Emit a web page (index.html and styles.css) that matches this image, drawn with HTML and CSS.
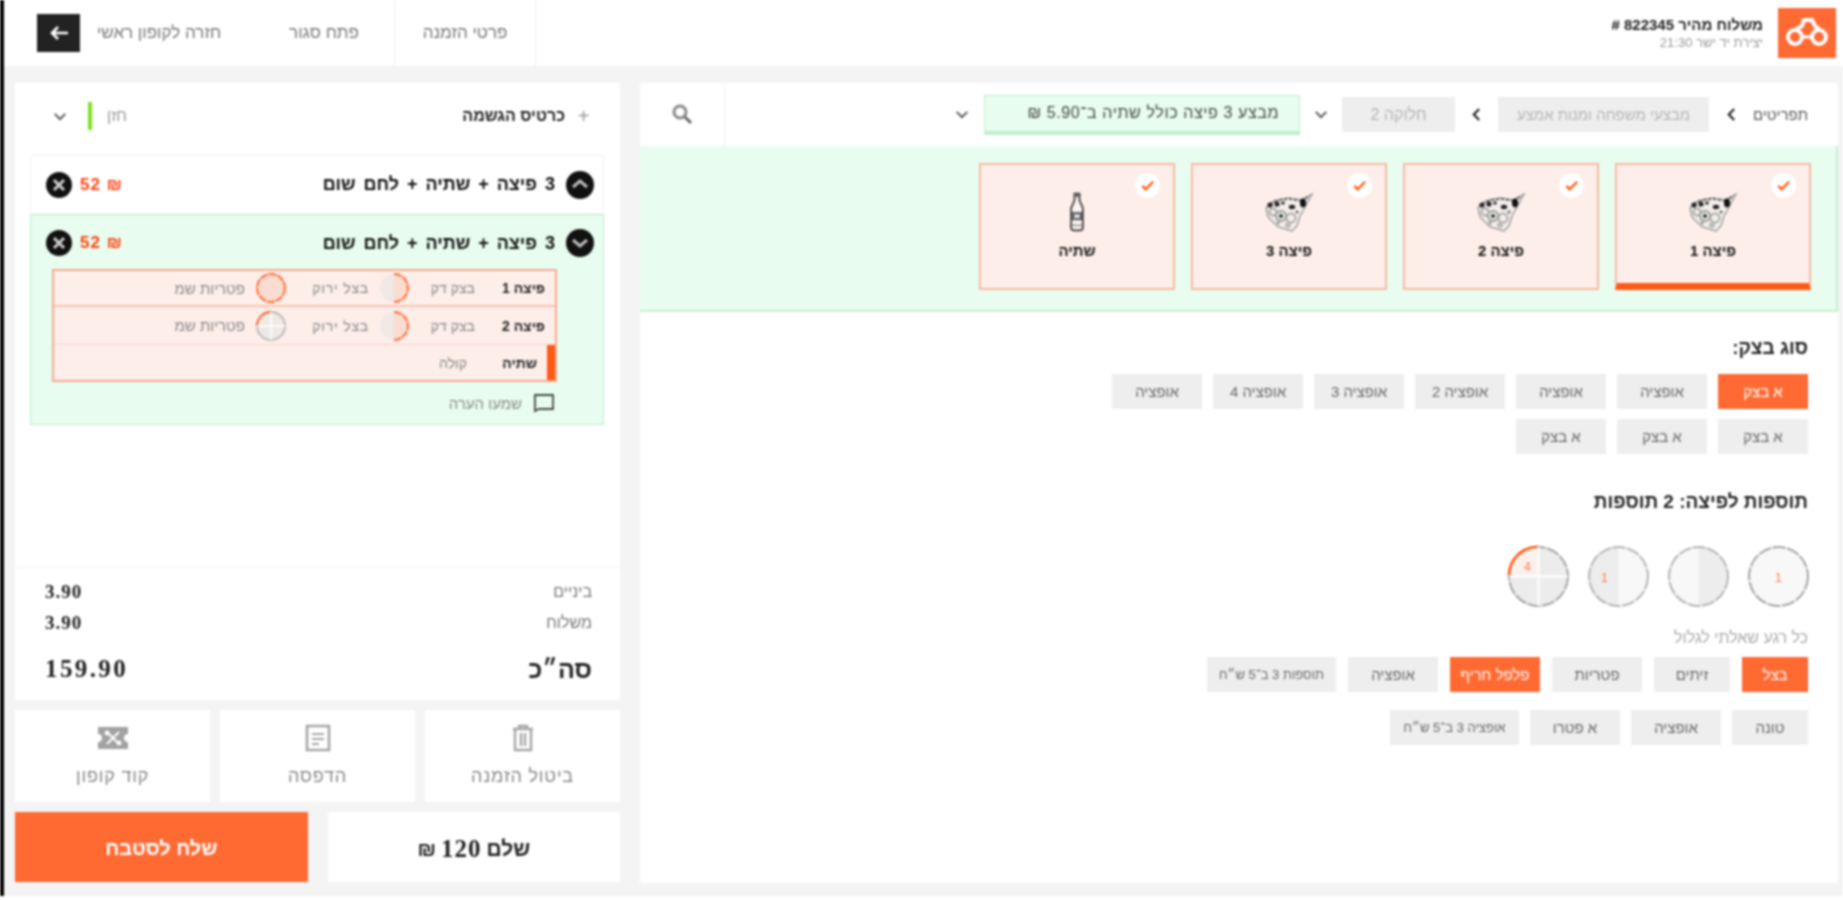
FILE: index.html
```html
<!DOCTYPE html>
<html lang="he" dir="rtl">
<head>
<meta charset="utf-8">
<title>הזמנה חדשה</title>
<link rel="stylesheet" href="styles.css">
</head>
<body>
<svg class="defs" aria-hidden="true">
  <symbol id="pizza" viewBox="0 0 50 40">
    <path d="M48 2 37 8 24 6 10 9 2 16 4 25 14 35 28 39 33 34 36 24 41 15Z" fill="#f4eeea" stroke="#9a9a9a" stroke-width="1.4"/>
    <path d="M6 12 14 8 26 7 38 9M44 5 36 10" fill="none" stroke="#555" stroke-width="1.6" stroke-dasharray="3 2"/>
    <circle cx="6" cy="13" r="2.6" fill="#222"/><circle cx="13" cy="12" r="2.6" fill="#222"/><circle cx="19" cy="11" r="1.8" fill="#333"/>
    <ellipse cx="28" cy="15" rx="3.2" ry="2.2" fill="#222"/><ellipse cx="39" cy="11" rx="3" ry="4.4" fill="#111"/>
    <circle cx="17" cy="24" r="2" fill="#1c3a2c"/><circle cx="17" cy="24" r="5" fill="none" stroke="#999" stroke-width="2"/>
    <circle cx="27" cy="26" r="4.5" fill="none" stroke="#aaa" stroke-width="2"/><circle cx="9" cy="20" r="3.5" fill="none" stroke="#aaa" stroke-width="2"/>
    <circle cx="33" cy="20" r="1.5" fill="#666"/><circle cx="24" cy="33" r="3" fill="#bbb"/><circle cx="14" cy="31" r="2" fill="#aaa"/>
  </symbol>
  <symbol id="bottle" viewBox="0 0 24 48">
    <path d="M9 2h6v8l4 9v24a3 3 0 0 1-3 3H8a3 3 0 0 1-3-3V19l4-9Z" fill="#fbf3ef" stroke="#333" stroke-width="2"/>
    <path d="M8 2h8v4H8ZM6 24h12v10H6Z" fill="#666"/><path d="M9 27h6v4H9Z" fill="#eee"/><path d="M6 40h12" stroke="#999" stroke-width="2"/>
  </symbol>
  <symbol id="check" viewBox="0 0 16 16"><path d="M2.5 8.5 6 12 14 4" fill="none" stroke="#ff5a14" stroke-width="2.6"/></symbol>
  <symbol id="chev-down" viewBox="0 0 16 10"><path d="M2 2 8 8 14 2" fill="none" stroke="#555" stroke-width="2.2"/></symbol>
  <symbol id="chev-left" viewBox="0 0 10 16"><path d="M8 2 2 8 8 14" fill="none" stroke="#222" stroke-width="2.4"/></symbol>
  <symbol id="trash" viewBox="0 0 24 28"><path d="M2 5h20M8 5V2h8v3M4 5v21h16V5M10 9v13M14 9v13" fill="none" stroke="#a6a6a6" stroke-width="2.4"/></symbol>
  <symbol id="receipt" viewBox="0 0 26 28"><path d="M2 2h22v24H2Z" fill="none" stroke="#a6a6a6" stroke-width="2.6"/><path d="M7 9h12v2H7Zm0 5h12v2H7Zm0 5h7v2H7Z" fill="#a6a6a6"/></symbol>
  <symbol id="coupon" viewBox="0 0 32 24"><path d="M1 1h30v7a4 4 0 0 0 0 8v7H1v-7a4 4 0 0 0 0-8Z" fill="#a2a2a2"/><path d="M10 6 22 18M22 6 10 18" stroke="#fff" stroke-width="2"/><circle cx="10" cy="7" r="2.4" fill="#fff"/><circle cx="22" cy="17" r="2.4" fill="#fff"/></symbol>
</svg>

<div class="app">
  <header class="topbar">
    <div class="brand">
      <div class="logo">
        <svg viewBox="0 0 58 50" width="58" height="50"><circle cx="17" cy="29" r="7" fill="none" stroke="#fff" stroke-width="4"/><circle cx="41" cy="29" r="7" fill="none" stroke="#fff" stroke-width="4"/><path d="M17 22 24 18 26 12H34L37 18 42 22" fill="none" stroke="#fff" stroke-width="4"/><path d="M24 29H34" stroke="#fff" stroke-width="3"/></svg>
      </div>
      <div class="brand-text">
        <div class="brand-title">משלוח מהיר 822345 #</div>
        <div class="brand-sub">יצירת יד ישר 21:30</div>
      </div>
    </div>
    <nav class="tabs">
      <div class="tab tab-details">פרטי הזמנה</div>
      <div class="tab tab-open">פתח סגור</div>
      <div class="tab tab-back">חזרה לקופון ראשי</div>
      <button class="back" type="button"><svg viewBox="0 0 20 16" width="20" height="16"><path d="M9 2 3 8 9 14M3 8H19" fill="none" stroke="#fff" stroke-width="2.6"/></svg></button>
    </nav>
  </header>

  <div class="workspace">
    <main class="main">
      <div class="crumbs">
        <span class="crumb-text">תפריטים</span>
        <span class="crumb-sep"><svg width="9" height="15"><use href="#chev-left"/></svg></span>
        <span class="chip chip-cat">מבצעי משפחה ומנות אמצע</span>
        <span class="crumb-sep crumb-sep-b"><svg width="9" height="15"><use href="#chev-left"/></svg></span>
        <span class="chip chip-step">חלוקה 2</span>
        <span class="crumb-sep crumb-sep-c"><svg width="14" height="9"><use href="#chev-down"/></svg></span>
        <span class="chip-green">מבצע 3 פיצה כולל שתיה ב־5.90 ₪</span>
        <span class="crumb-sep"><svg width="14" height="9"><use href="#chev-down"/></svg></span>
        <span class="crumb-fill"></span>
        <span class="search"><svg viewBox="0 0 24 24" width="24" height="24"><circle cx="10" cy="9" r="6" fill="none" stroke="#8a8a8a" stroke-width="3"/><path d="M15 14 21 20" stroke="#666" stroke-width="3"/></svg></span>
      </div>

      <div class="band">
        <div class="card card-active">
          <span class="tick"><svg width="15" height="15"><use href="#check"/></svg></span>
          <svg class="card-icon" width="50" height="40"><use href="#pizza"/></svg>
          <div class="card-label">פיצה 1</div>
        </div>
        <div class="card">
          <span class="tick"><svg width="15" height="15"><use href="#check"/></svg></span>
          <svg class="card-icon" width="50" height="40"><use href="#pizza"/></svg>
          <div class="card-label">פיצה 2</div>
        </div>
        <div class="card">
          <span class="tick"><svg width="15" height="15"><use href="#check"/></svg></span>
          <svg class="card-icon" width="50" height="40"><use href="#pizza"/></svg>
          <div class="card-label">פיצה 3</div>
        </div>
        <div class="card">
          <span class="tick"><svg width="15" height="15"><use href="#check"/></svg></span>
          <svg class="card-icon" width="22" height="40"><use href="#bottle"/></svg>
          <div class="card-label">שתיה</div>
        </div>
      </div>

      <section class="config">
        <h2 class="sec-title">סוג בצק:</h2>
        <div class="options options-dough">
          <button class="opt opt-on" type="button">א בצק</button>
          <button class="opt" type="button">אופציה</button>
          <button class="opt" type="button">אופציה</button>
          <button class="opt" type="button">אופציה 2</button>
          <button class="opt" type="button">אופציה 3</button>
          <button class="opt" type="button">אופציה 4</button>
          <button class="opt" type="button">אופציה</button>
          <button class="opt" type="button">א בצק</button>
          <button class="opt" type="button">א בצק</button>
          <button class="opt" type="button">א בצק</button>
        </div>

        <h2 class="sec-title sec-title-b">תוספות לפיצה: 2 תוספות</h2>
        <div class="sides">
          <svg class="side" viewBox="0 0 62 62" width="63" height="63"><circle cx="31" cy="31" r="29" fill="#f8f8f8" stroke="#a4a4a4" stroke-width="2" stroke-dasharray="13 1.5"/><text x="31" y="36" class="side-num">1</text></svg>
          <svg class="side" viewBox="0 0 62 62" width="63" height="63"><circle cx="31" cy="31" r="29" fill="#f8f8f8"/><path d="M31 2A29 29 0 0 1 31 60Z" fill="#ededed"/><circle cx="31" cy="31" r="29" fill="none" stroke="#b4b4b4" stroke-width="2" stroke-dasharray="13 1.5"/></svg>
          <svg class="side" viewBox="0 0 62 62" width="63" height="63"><circle cx="31" cy="31" r="29" fill="#f8f8f8"/><path d="M31 2A29 29 0 0 0 31 60Z" fill="#ededed"/><circle cx="31" cy="31" r="29" fill="none" stroke="#b4b4b4" stroke-width="2" stroke-dasharray="13 1.5"/><text x="17" y="36" class="side-num">1</text></svg>
          <svg class="side" viewBox="0 0 62 62" width="63" height="63"><circle cx="31" cy="31" r="29" fill="#ececec" stroke="#a4a4a4" stroke-width="2" stroke-dasharray="13 1.5"/><path d="M30 30V2A28 28 0 0 0 2 30Z" fill="#fbf1ec"/><path d="M31 2V60M2 31H60" stroke="#fff" stroke-width="2"/><path d="M30 2A28 28 0 0 0 2 30" fill="none" stroke="#ff5a14" stroke-width="2.6"/><text x="20" y="26" class="side-num">4</text></svg>
        </div>
        <div class="sides-label">כל רגע שאלתי לגלול</div>
        <div class="options options-top">
          <button class="opt opt-on opt-66" type="button">בצל</button>
          <button class="opt opt-76" type="button">זיתים</button>
          <button class="opt" type="button">פטריות</button>
          <button class="opt opt-on" type="button">פלפל חריף</button>
          <button class="opt" type="button">אופציה</button>
          <button class="opt opt-wide" type="button">תוספות 3 ב־5 ש״ח</button>
        </div>
        <div class="options options-top options-last">
          <button class="opt opt-76" type="button">טונה</button>
          <button class="opt" type="button">אופציה</button>
          <button class="opt" type="button">א פטרו</button>
          <button class="opt opt-wide" type="button">אופציה 3 ב־5 ש״ח</button>
        </div>
      </section>
    </main>

    <aside class="side-col">
      <div class="cart">
        <div class="cart-head">
          <div class="cart-head-title"><span class="plus">+</span>כרטיס הגשמה</div>
          <div class="cart-select">
            <span class="cart-select-text">חזן</span>
            <span class="cart-select-bar"></span>
            <svg width="14" height="9"><use href="#chev-down"/></svg>
          </div>
        </div>

        <div class="items">
          <div class="item">
            <div class="item-head">
              <svg class="round" viewBox="0 0 28 28" width="28" height="28"><circle cx="14" cy="14" r="14" fill="#111"/><path d="M7 16 14 10 21 16" fill="none" stroke="#bbb" stroke-width="3"/></svg>
              <span class="item-title">3 פיצה + שתיה + לחם שום</span>
              <span class="item-price">₪ 52</span>
              <svg class="round-x" viewBox="0 0 26 26" width="26" height="26"><circle cx="13" cy="13" r="13" fill="#111"/><path d="M8 8 18 18M18 8 8 18" stroke="#ccc" stroke-width="3"/></svg>
            </div>
          </div>
          <div class="item item-open">
            <div class="item-head">
              <svg class="round" viewBox="0 0 28 28" width="28" height="28"><circle cx="14" cy="14" r="14" fill="#111"/><path d="M7 11 14 17 21 11" fill="none" stroke="#bbb" stroke-width="3"/></svg>
              <span class="item-title">3 פיצה + שתיה + לחם שום</span>
              <span class="item-price">₪ 52</span>
              <svg class="round-x" viewBox="0 0 26 26" width="26" height="26"><circle cx="13" cy="13" r="13" fill="#111"/><path d="M8 8 18 18M18 8 8 18" stroke="#ccc" stroke-width="3"/></svg>
            </div>
            <div class="sub">
              <div class="sub-row">
                <span class="sub-name">פיצה 1</span>
                <span class="sub-dough">בצק דק</span>
                <svg class="mini" viewBox="0 0 30 30" width="30" height="30"><circle cx="15" cy="15" r="14" fill="#f0e9e6"/><path d="M15 1A14 14 0 0 1 15 29Z" fill="#fbdcd0"/><path d="M15 1A14 14 0 0 1 15 29" fill="none" stroke="#ff6a33" stroke-width="2" stroke-dasharray="8 1"/></svg>
                <span class="sub-top">בצל ירוק</span>
                <svg class="mini mini-b" viewBox="0 0 30 30" width="30" height="30"><circle cx="15" cy="15" r="14" fill="#fbdcd0" stroke="#ff6a33" stroke-width="2" stroke-dasharray="8 1"/></svg>
                <span class="sub-top-b">פטריות שמ</span>
              </div>
              <div class="sub-row sub-row-tall">
                <span class="sub-name">פיצה 2</span>
                <span class="sub-dough">בצק דק</span>
                <svg class="mini" viewBox="0 0 30 30" width="30" height="30"><circle cx="15" cy="15" r="14" fill="#f0e9e6"/><path d="M15 1A14 14 0 0 1 15 29Z" fill="#fbdcd0"/><path d="M15 1A14 14 0 0 1 15 29" fill="none" stroke="#ff6a33" stroke-width="2" stroke-dasharray="8 1"/></svg>
                <span class="sub-top">בצל ירוק</span>
                <svg class="mini mini-b" viewBox="0 0 30 30" width="30" height="30"><circle cx="15" cy="15" r="14" fill="#efe9e6" stroke="#bbb" stroke-width="2"/><path d="M15 1A14 14 0 0 0 1 15" fill="none" stroke="#ff6a33" stroke-width="2"/><path d="M15 1V29M1 15H29" stroke="#fff" stroke-width="1.5"/></svg>
                <span class="sub-top-b">פטריות שמ</span>
              </div>
              <div class="sub-row sub-row-last">
                <span class="sub-name">שתיה</span>
                <span class="sub-dough">קולה</span>
              </div>
            </div>
            <div class="note">
              <svg viewBox="0 0 22 20" width="22" height="20"><path d="M2 2H20V16H6L2 18Z" fill="none" stroke="#444" stroke-width="1.8"/></svg>
              <span>שמעו הערה</span>
            </div>
          </div>
        </div>

        <div class="totals">
          <div class="tot-row"><span>ביניים</span><b class="tot-num">3.90</b></div>
          <div class="tot-row"><span>משלוח</span><b class="tot-num">3.90</b></div>
          <div class="tot-row tot-grand"><span>סה״כ</span><b class="tot-num">159.90</b></div>
        </div>
      </div>

      <div class="actions">
        <button class="action" type="button"><svg width="24" height="28"><use href="#trash"/></svg><span>ביטול הזמנה</span></button>
        <button class="action" type="button"><svg width="26" height="28"><use href="#receipt"/></svg><span>הדפסה</span></button>
        <button class="action" type="button"><svg width="32" height="24"><use href="#coupon"/></svg><span>קוד קופון</span></button>
      </div>

      <div class="pay">
        <button class="pay-btn pay-total" type="button">שלם <b>120</b>₪</button>
        <button class="pay-btn pay-send" type="button">שלח לסטבח</button>
      </div>
    </aside>
  </div>
</div>
</body>
</html>
```

FILE: styles.css
```css
* { box-sizing: border-box; }
html, body { margin: 0; height: 100%; }
body {
  background: #fff;
  font-family: "Liberation Sans", "DejaVu Sans", sans-serif;
  color: #222;
  overflow: hidden;
}
button { font: inherit; border: 0; padding: 0; color: inherit; }
.defs { display: none; }

.app {
  height: 896px;
  border-left: 4px solid #000;
  background: #f4f4f4;
  display: flex;
  flex-direction: column;
  filter: blur(1px);
}

/* top bar */
.topbar {
  height: 66px;
  background: #fff;
  display: flex;
  justify-content: space-between;
  align-items: stretch;
  padding: 0 7px 0 33px;
  flex: none;
}
.brand { display: flex; gap: 15px; align-items: flex-start; padding-top: 8px; }
.logo { width: 58px; height: 50px; background: #ff6a33; }
.logo svg { display: block; }
.brand-text { padding-top: 8px; }
.brand-title { font-size: 15px; font-weight: 700; line-height: 18px; white-space: nowrap; }
.brand-sub { font-size: 13px; color: #999; line-height: 16px; margin-top: 1px; }
.tabs { display: flex; align-items: stretch; }
.tab { display: flex; align-items: center; justify-content: center; font-size: 17px; color: #777; white-space: nowrap; }
.tab-details { width: 142px; border-left: 1px solid #eee; border-right: 1px solid #eee; }
.tab-open { width: 140px; }
.tab-back { width: 174px; padding: 0 34px 0 18px; }
.back {
  width: 43px; height: 38px; align-self: flex-start; margin-top: 14px;
  background: #222; display: flex; align-items: center; justify-content: center;
}

/* workspace */
.workspace {
  flex: 1;
  min-height: 0;
  display: flex;
  gap: 20px;
  padding: 17px 5px 13px 11px;
}
.main {
  width: 1198px;
  background: #fff;
  display: flex;
  flex-direction: column;
}
.crumbs {
  height: 63px;
  flex: none;
  display: flex;
  align-items: center;
  padding-right: 30px;
  font-size: 15px;
  color: #555;
}
.crumb-text { width: 55px; white-space: nowrap; }
.crumb-sep { width: 44px; display: flex; justify-content: center; }
.crumb-sep-b { width: 43px; }
.crumb-sep-c { width: 42px; }
.chip {
  height: 35px; background: #eee; color: #b4b4b4;
  display: flex; align-items: center; justify-content: center; font-size: 15px; white-space: nowrap;
}
.chip-cat { width: 211px; }
.chip-step { width: 113px; font-size: 16px; }
.chip-green {
  width: 316px; height: 40px; background: #e8fdef;
  border: 1px solid #bfeecd; border-bottom-width: 4px;
  display: flex; align-items: center; padding: 0 20px;
  font-size: 16px; letter-spacing: 0.6px; color: #444; white-space: nowrap;
}
.crumb-fill { flex: 1; height: 100%; }
.search {
  width: 85px; height: 100%;
  border-right: 1px solid #f2f2f2;
  display: flex; align-items: center; justify-content: center;
}

.band {
  height: 166px;
  flex: none;
  background: #e8fdef;
  border-bottom: 2px solid #c6efd3;
  border-right: 2px solid #c6efd3;
  padding: 17px 25px 0 0;
  display: flex;
  gap: 16px;
}
.card {
  position: relative;
  width: 196px;
  height: 127px;
  background: #fdeeea;
  border: 2px solid #f7b9a3;
  display: flex;
  flex-direction: column;
  align-items: center;
  padding-top: 27px;
}
.card-active { border-bottom: 7px solid #ff5a14; }
.card-icon { display: block; }
.card-label { font-size: 15px; font-weight: 700; color: #111; margin-top: 9px; line-height: 20px; }
.tick {
  position: absolute; top: 8px; right: 13px;
  width: 25px; height: 25px; border-radius: 50%; background: #fff;
  display: flex; align-items: center; justify-content: center;
}

.config { padding: 26px 30px 0 0; flex: 1; }
.sec-title { margin: 0; font-size: 19px; font-weight: 700; line-height: 20px; color: #222; }
.sec-title-b { margin-top: 38px; }
.options { display: flex; flex-wrap: wrap; gap: 10px 11px; }
.options-dough { width: 700px; margin-top: 16px; }
.opt {
  width: 90px; height: 35px; background: #eee; color: #666;
  font-size: 15px; display: flex; align-items: center; justify-content: center;
  white-space: nowrap;
}
.opt-on { background: #ff6a33; color: #fff; }
.opt-66 { width: 66px; }
.opt-76 { width: 76px; }
.opt-wide { width: 129px; font-size: 13px; }
.sides { display: flex; gap: 17px; margin: 33px -2px 0 0; }
.side { display: block; }
.side-num { font: 12px "Liberation Sans", sans-serif; fill: #ff7a4a; text-anchor: middle; }
.sides-label { font-size: 16px; color: #aaa; line-height: 16px; margin-top: 22px; }
.options-top { margin-top: 11px; gap: 12px; }
.options-last { margin-top: 18px; gap: 11px; }

/* side column */
.side-col { width: 605px; display: flex; flex-direction: column; gap: 10px; }
.cart { height: 617px; background: #fff; display: flex; flex-direction: column; }
.cart-head {
  height: 72px; flex: none;
  display: flex; justify-content: space-between; align-items: center;
  padding: 0 26px 6px 25px;
}
.cart-head-title { font-size: 16px; font-weight: 700; color: #222; display: flex; align-items: center; gap: 8px; }
.plus { font-weight: 400; font-size: 20px; color: #999; width: 21px; text-align: center; line-height: 20px; }
.cart-select { display: flex; align-items: center; font-size: 16px; color: #999; height: 30px; }
.cart-select-text { margin-left: 15px; }
.cart-select-bar { width: 4px; height: 28px; background: #7be31e; margin-left: 21px; }
.cart-select svg { margin-left: 13px; }

.items { padding: 0 16px 0 15px; }
.item { border: 1px solid #f4f4f4; }
.item-head {
  height: 57px; display: flex; align-items: center;
  padding: 0 9px 0 15px;
}
.round { flex: none; }
.item-title { font-size: 18px; font-weight: 700; color: #111; margin-right: 11px; word-spacing: 3px; white-space: nowrap; }
.item-price { margin-right: auto; font-size: 17px; font-weight: 700; color: #ff3d0a; margin-left: 8px; letter-spacing: 1px; white-space: nowrap; }
.round-x { flex: none; }
.item-open { background: #e8fdef; border-color: #bdeccb; height: 211px; }
.item-open .item-head { height: 54px; padding-top: 2px; }
.sub {
  margin: 0 46px 0 21px;
  background: #fdeeea;
  border: 2px solid #f7a98e;
}
.sub-row {
  height: 36px; display: flex; align-items: center;
  padding-right: 10px; font-size: 14px; color: #888;
  border-bottom: 2px solid #f9c3b0;
}
.sub-row-tall { height: 38px; border-bottom: 1px solid #fad3c5; }
.sub-row-last { height: 35px; border: 0; border-right: 8px solid #ff5a14; padding-right: 10px; }
.sub-name { width: 48px; font-weight: 700; color: #222; margin-left: 22px; white-space: nowrap; }
.sub-dough { width: 46px; margin-left: 20px; white-space: nowrap; }
.mini { flex: none; margin-left: 10px; }
.mini-b { margin-left: 11px; }
.sub-top { width: 66px; margin-left: 17px; white-space: nowrap; letter-spacing: 0.8px; }
.sub-top-b { white-space: nowrap; font-size: 15px; }
.note {
  display: flex; align-items: center; gap: 11px;
  padding: 11px 48px 0 0; font-size: 15px; color: #888;
}

.totals {
  margin-top: auto;
  height: 133px;
  flex: none;
  border-top: 1px solid #f2f2f2;
  padding: 14px 28px 0 30px;
  display: flex;
  flex-direction: column;
  gap: 11px;
}
.tot-row { display: flex; justify-content: space-between; align-items: center; height: 20px; font-size: 16px; color: #777; }
.tot-num { font-family: "Liberation Serif", serif; font-size: 19px; letter-spacing: 1px; color: #222; direction: ltr; }
.tot-grand { height: 30px; margin-top: 10px; font-size: 25px; font-weight: 700; color: #222; }
.tot-grand .tot-num { font-size: 25px; letter-spacing: 2.4px; }

.actions { display: flex; gap: 10px; height: 92px; flex: none; }
.action {
  flex: 1; background: #fff; display: flex; flex-direction: column;
  align-items: center; padding-top: 14px; gap: 14px;
  font-size: 18px; letter-spacing: 0.8px; color: #888;
}
.action svg { height: 28px; }

.pay { display: flex; gap: 20px; height: 70px; flex: none; }
.pay-btn { flex: 1; display: flex; align-items: center; justify-content: center; padding-top: 3px; }
.pay-total { background: #fff; font-size: 21px; font-weight: 700; color: #222; gap: 5px; }
.pay-total b { font-family: "Liberation Serif", serif; font-size: 25px; letter-spacing: 1px; }
.pay-send { background: #ff6a33; color: #fff; font-size: 20px; font-weight: 700; }
```
